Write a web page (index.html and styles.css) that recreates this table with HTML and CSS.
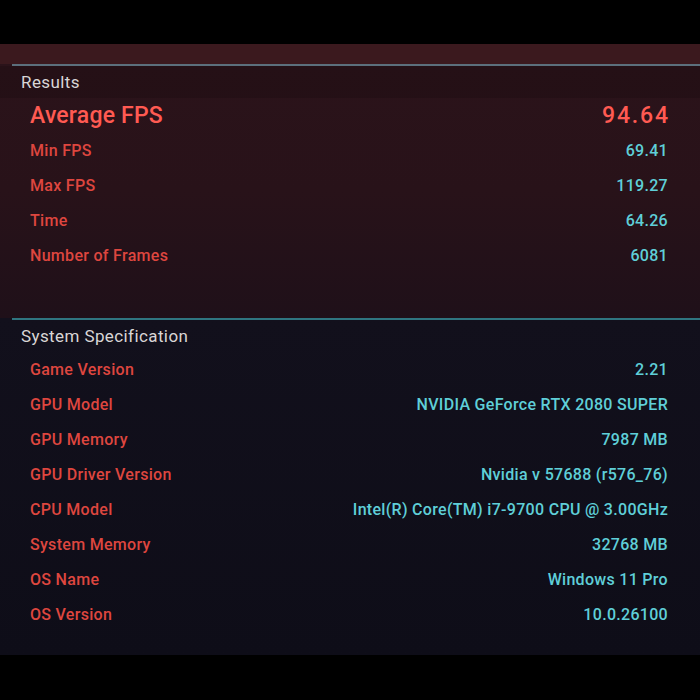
FILE: index.html
```html
<!DOCTYPE html>
<html>
<head>
<meta charset="utf-8">
<link rel="stylesheet" href="styles.css">
</head>
<body>
<div class="top-bar"></div>
<div class="screen">
  <div class="band"></div>
  <section class="panel results">
    <div class="rule rule-gray"></div>
    <div class="title">Results</div>
    <div class="row big"><span class="label">Average FPS</span><span class="value">94.64</span></div>
    <div class="row"><span class="label">Min FPS</span><span class="value">69.41</span></div>
    <div class="row"><span class="label">Max FPS</span><span class="value">119.27</span></div>
    <div class="row"><span class="label">Time</span><span class="value">64.26</span></div>
    <div class="row"><span class="label">Number of Frames</span><span class="value">6081</span></div>
  </section>
  <section class="panel spec">
    <div class="rule rule-teal"></div>
    <div class="title">System Specification</div>
    <div class="row"><span class="label">Game Version</span><span class="value">2.21</span></div>
    <div class="row"><span class="label">GPU Model</span><span class="value">NVIDIA GeForce RTX 2080 SUPER</span></div>
    <div class="row"><span class="label">GPU Memory</span><span class="value">7987 MB</span></div>
    <div class="row"><span class="label">GPU Driver Version</span><span class="value">Nvidia v 57688 (r576_76)</span></div>
    <div class="row"><span class="label">CPU Model</span><span class="value">Intel(R) Core(TM) i7-9700 CPU @ 3.00GHz</span></div>
    <div class="row"><span class="label">System Memory</span><span class="value">32768 MB</span></div>
    <div class="row"><span class="label">OS Name</span><span class="value">Windows 11 Pro</span></div>
    <div class="row"><span class="label">OS Version</span><span class="value">10.0.26100</span></div>
  </section>
</div>
</body>
</html>
```
FILE: styles.css
```css
html, body {
  margin: 0;
  padding: 0;
  background: #000;
  width: 700px;
  height: 700px;
  overflow: hidden;
  font-family: "Roboto", "Liberation Sans", sans-serif;
}
.top-bar {
  height: 44px;
  background: #000;
}
.screen {
  display: flex;
  flex-direction: column;
}
.band {
  height: 20px;
  background: #3b191e;
}
.panel {
  display: flex;
  flex-direction: column;
}
.results {
  background: linear-gradient(180deg, #2b131a 0%, #281219 50%, #1f1019 100%);
  padding-bottom: 45px;
}
.spec {
  background: linear-gradient(180deg, #12101c 0%, #0e0d18 100%);
  padding-bottom: 23px;
}
.rule {
  height: 2px;
  margin-left: 12px;
}
.rule-gray {
  background: #5c6f7c;
}
.rule-teal {
  background: #2f7580;
}
.title {
  height: 32px;
  line-height: 32px;
  padding-left: 21px;
  font-size: 17px;
  letter-spacing: 0.4px;
  color: #d9d6d6;
}
.results .title {
  background: rgba(0, 0, 0, 0.12);
}
.row {
  height: 35px;
  display: flex;
  align-items: center;
  justify-content: space-between;
  padding-left: 30px;
  padding-right: 32px;
  font-size: 16px;
  font-weight: 500;
  letter-spacing: 0.3px;
}
.label {
  color: #de463f;
}
.value {
  color: #5fcfd8;
}
.row.big {
  font-size: 23px;
  letter-spacing: 0.2px;
}
.row.big .value {
  letter-spacing: 1.8px;
  margin-right: -1.8px;
}
.row.big .label,
.row.big .value {
  color: #ff5a52;
}
```
